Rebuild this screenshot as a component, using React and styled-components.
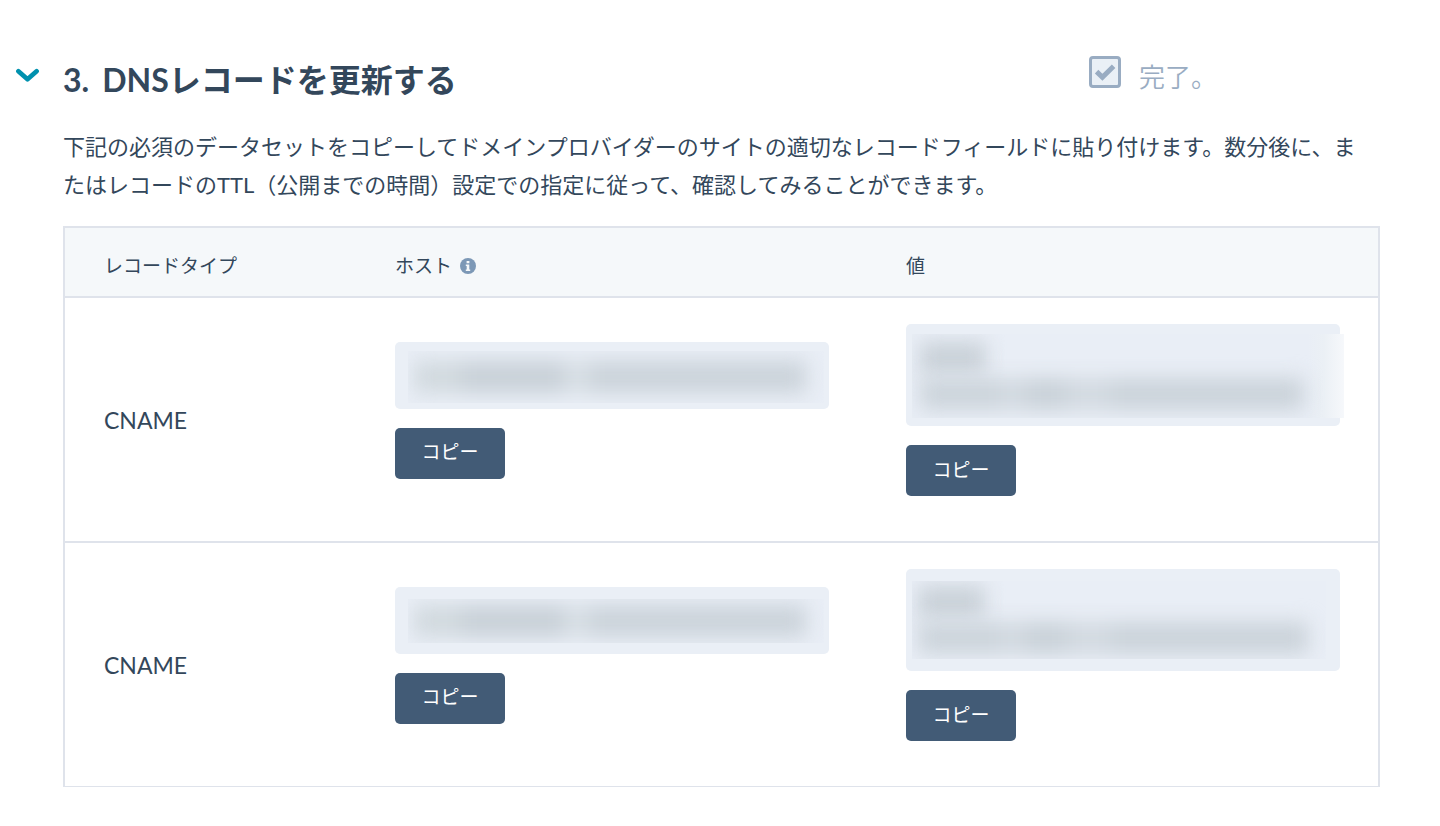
import React, { useState } from 'react';
import styled, { createGlobalStyle } from 'styled-components';


const GlobalStyle = createGlobalStyle`
  *, *::before, *::after {
    box-sizing: border-box;
  }
  body {
    margin: 0;
    background: #fff;
    color: #33475b;
    font-family: Lato, 'Noto Sans CJK JP', sans-serif;
  }
  button, input {
    font-family: inherit;
  }
`;

const Section = styled.section`
  display: flex;
  align-items: flex-start;
  padding: 56px 60px 39px 0;
`;

const Toggle = styled.button`
  flex: 0 0 63px;
  display: flex;
  padding: 12px 0 12px 16px;
  border: 0;
  background: none;
  cursor: pointer;
`;

const Content = styled.div`
  flex: 1;
  min-width: 0;
`;

const TitleRow = styled.header`
  display: flex;
  align-items: flex-start;
  justify-content: space-between;
  margin-bottom: 24px;
`;

const Title = styled.h2`
  display: flex;
  gap: 13px;
  margin: 0;
  font-size: 32px;
  line-height: 48px;
  font-weight: 700;
`;

const Status = styled.label`
  flex: 0 0 291px;
  display: flex;
  align-items: flex-start;
  gap: 18px;
  color: #99acc2;
  font-size: 26px;
  font-weight: 350;
  line-height: 42px;
`;

const CheckWrap = styled.span`
  display: grid;
  width: 32px;
  height: 32px;

  > * {
    grid-area: 1 / 1;
    place-self: center;
  }
`;

const Checkbox = styled.input`
  appearance: none;
  width: 32px;
  height: 32px;
  margin: 0;
  border: 3px solid #99acc2;
  border-radius: 4px;
  background: #eaf0f6;
`;

const Description = styled.p`
  margin: 0 0 22px;
  padding-right: 8px;
  font-size: 22px;
  line-height: 38px;
`;

const Table = styled.table`
  width: 100%;
  table-layout: fixed;
  border: 2px solid #dfe3eb;
  border-bottom-width: 1px;
  border-collapse: separate;
  border-spacing: 0;
`;

const HeadCell = styled.th`
  width: ${({ $width }) => $width || 'auto'};
  padding: 24px 38px 16px 39px;
  border-bottom: 2px solid #dfe3eb;
  background: #f5f8fa;
  font-size: 19px;
  font-weight: 400;
  line-height: 28px;
  text-align: left;
`;

const HeadLabel = styled.span`
  display: flex;
  align-items: center;
  gap: 8px;
`;

const Cell = styled.td`
  padding: 26px 38px 26px 39px;
  font-size: 23px;
  line-height: 34px;
  vertical-align: middle;

  tr:not(:last-child) > & {
    border-bottom: 2px solid #dfe3eb;
  }
`;

const Field = styled.div`
  height: ${({ $lines }) => ($lines > 1 ? '102px' : '67px')};
  padding: ${({ $inset }) => $inset};
  margin-bottom: 19px;
  border-radius: 5px;
  background: #eaeff6;
`;

const Redaction = styled.div`
  display: flex;
  flex-direction: column;
  justify-content: center;
  gap: 4px;
  height: 100%;
  margin-right: ${({ $spill }) => ($spill ? '-4px' : '0')};
  padding: ${({ $spill }) => ($spill ? '0 40px 0 8px' : '0 18px 0 6px')};
  overflow: hidden;
  background: ${({ $spill }) =>
    $spill
      ? 'linear-gradient(to left, #f6f8fb, #ebf0f5 20px, #e9eef6 36px)'
      : '#e9eef6'};
`;

const Line = styled.div`
  flex: 0 0 32px;
  display: flex;
  filter: blur(10px);
`;

const Smudge = styled.span`
  flex: ${({ $size }) => $size};
  background: ${({ $tone }) => $tone || 'transparent'};
`;

const CopyButton = styled.button`
  display: block;
  width: 110px;
  height: 51px;
  margin-bottom: 19px;
  padding: 0 0 2px;
  border: 0;
  border-radius: 5px;
  background: #425b76;
  color: #fff;
  font-size: 19px;
  line-height: 28px;
  cursor: pointer;
`;

const ChevronIcon = () => (
  <svg width="23" height="15" viewBox="0 0 23 15" fill="none" aria-hidden="true">
    <path d="M2.4 3.2 11.5 11.2 20.6 3.2" stroke="#0091ae" strokeWidth="4.7" strokeLinecap="round" strokeLinejoin="round" />
  </svg>
);

const CheckIcon = () => (
  <svg width="22" height="18" viewBox="0 0 22 18" fill="none" aria-hidden="true">
    <path d="M2.6 8.6 8.4 14.2 19.6 3.2" stroke="#99acc2" strokeWidth="5" strokeLinejoin="miter" />
  </svg>
);

const InfoIcon = () => (
  <svg width="16" height="16" viewBox="0 0 16 16" aria-hidden="true">
    <circle cx="8" cy="8" r="8" fill="#7c98b6" />
    <path d="M6.6 3h2.8v2.3H6.6zM5.8 6.6h3.5v4.8h.9v1.5H5.8v-1.5h.9V8.1h-.9z" fill="#f5f8fa" />
  </svg>
);

const hostLines = [
  [[48, '#d1d9de'], [104, '#c8d0d7'], [23, '#d8dfe5'], [219, '#cbd3da']],
];

const valueLines = [
  [[66, '#c9d1d8'], [320]],
  [[80, '#ccd4db'], [24, '#d2d9e0'], [40, '#c9d1d8'], [44, '#d2d9e0'], [190, '#cbd3da']],
];

const records = [
  { id: 1, type: 'CNAME', hostInset: '9px 5px 6px 13px', valueInset: '10px 0 8px 6px', spill: true },
  { id: 2, type: 'CNAME', hostInset: '12px 5px 11px 13px', valueInset: '12px 14px 12px 6px', spill: false },
];

const RedactedField = ({ lines, inset, spill }) => (
  <Field $lines={lines.length} $inset={inset}>
    <Redaction $spill={spill}>
      {lines.map((line, i) => (
        <Line key={i}>
          {line.map(([size, tone], j) => (
            <Smudge key={j} $size={size} $tone={tone} />
          ))}
        </Line>
      ))}
    </Redaction>
  </Field>
);

const RecordRow = ({ record }) => (
  <tr>
    <Cell>{record.type}</Cell>
    <Cell>
      <RedactedField lines={hostLines} inset={record.hostInset} />
      <CopyButton type="button">コピー</CopyButton>
    </Cell>
    <Cell>
      <RedactedField lines={valueLines} inset={record.valueInset} spill={record.spill} />
      <CopyButton type="button">コピー</CopyButton>
    </Cell>
  </tr>
);

const App = () => {
  const [open, setOpen] = useState(true);

  return (
    <>
      <GlobalStyle />
      <Section lang="ja">
        <Toggle
          type="button"
          aria-label="DNSレコードを更新する"
          aria-expanded={open}
          onClick={() => setOpen(!open)}
        >
          <ChevronIcon />
        </Toggle>
        <Content>
          <TitleRow>
            <Title>
              <span>3.</span>
              <span>DNSレコードを更新する</span>
            </Title>
            <Status htmlFor="step-done">
              <CheckWrap>
                <Checkbox id="step-done" type="checkbox" checked disabled readOnly />
                <CheckIcon />
              </CheckWrap>
              完了。
            </Status>
          </TitleRow>
          {open && (
            <>
              <Description>
                下記の必須のデータセットをコピーしてドメインプロバイダーのサイトの適切なレコードフィールドに貼り付けます。数分後に、またはレコードのTTL（公開までの時間）設定での指定に従って、確認してみることができます。
              </Description>
              <Table>
                <thead>
                  <tr>
                    <HeadCell scope="col" $width="291px">レコードタイプ</HeadCell>
                    <HeadCell scope="col">
                      <HeadLabel>
                        ホスト
                        <InfoIcon />
                      </HeadLabel>
                    </HeadCell>
                    <HeadCell scope="col">値</HeadCell>
                  </tr>
                </thead>
                <tbody>
                  {records.map((record) => (
                    <RecordRow key={record.id} record={record} />
                  ))}
                </tbody>
              </Table>
            </>
          )}
        </Content>
      </Section>
    </>
  );
};

export default App;
